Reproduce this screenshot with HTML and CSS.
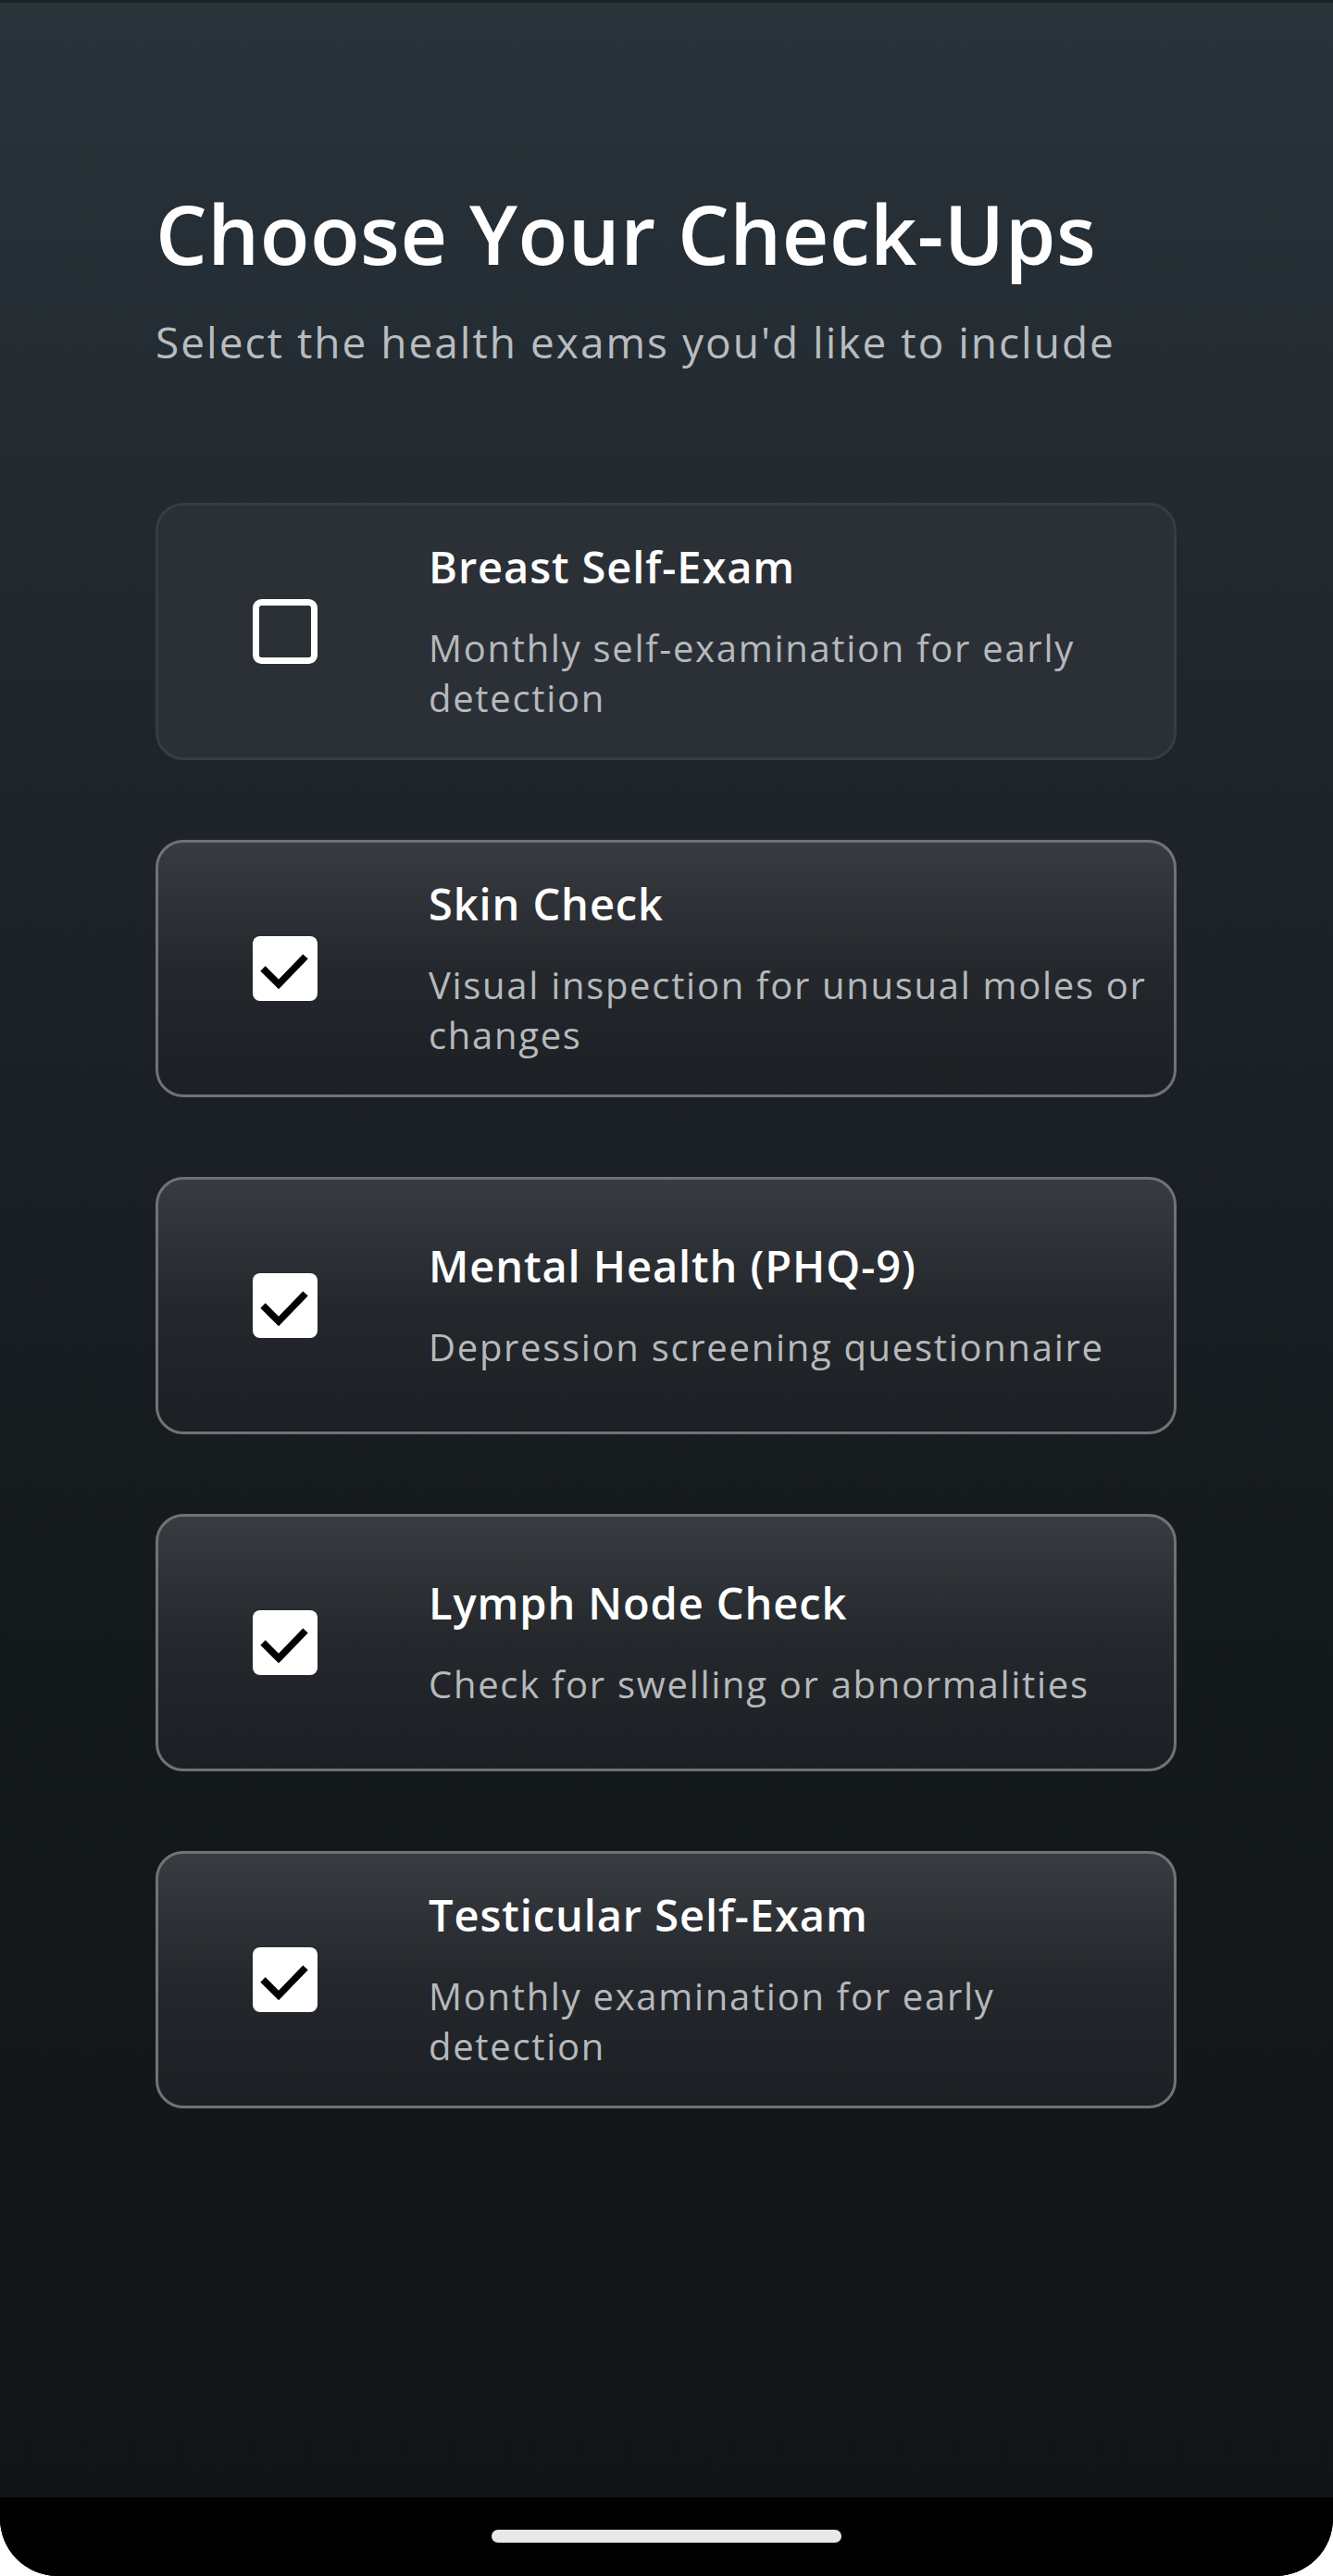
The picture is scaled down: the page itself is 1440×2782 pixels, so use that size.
FILE: index.html
```html
<!DOCTYPE html>
<html lang="en">
<head>
<meta charset="utf-8">
<title>Choose Your Check-Ups</title>
<link rel="stylesheet" href="styles.css">
</head>
<body>
<div class="screen">
  <div class="status-strip"></div>
  <main class="content">
    <header class="intro">
      <h1 class="title">Choose Your Check-Ups</h1>
      <p class="subtitle">Select the health exams you'd like to include</p>
    </header>
    <ul class="exam-list">
      <li class="exam">
        <span class="box">
          <svg viewBox="0 0 70 70" width="70" height="70"><rect x="3.5" y="3.5" width="63" height="63" rx="6" fill="none" stroke="#fff" stroke-width="7"/></svg>
        </span>
        <div class="exam-text">
          <h2 class="exam-name">Breast Self-Exam</h2>
          <p class="exam-desc">Monthly self-examination for early detection</p>
        </div>
      </li>
      <li class="exam selected">
        <span class="box">
          <svg viewBox="0 0 70 70" width="70" height="70"><rect x="0" y="0" width="70" height="70" rx="8" fill="#fff"/><path d="M11 35 L28 52 L57 22" fill="none" stroke="#000" stroke-width="7.5"/></svg>
        </span>
        <div class="exam-text">
          <h2 class="exam-name">Skin Check</h2>
          <p class="exam-desc">Visual inspection for unusual moles or changes</p>
        </div>
      </li>
      <li class="exam selected">
        <span class="box">
          <svg viewBox="0 0 70 70" width="70" height="70"><rect x="0" y="0" width="70" height="70" rx="8" fill="#fff"/><path d="M11 35 L28 52 L57 22" fill="none" stroke="#000" stroke-width="7.5"/></svg>
        </span>
        <div class="exam-text">
          <h2 class="exam-name">Mental Health (PHQ-9)</h2>
          <p class="exam-desc">Depression screening questionnaire</p>
        </div>
      </li>
      <li class="exam selected">
        <span class="box">
          <svg viewBox="0 0 70 70" width="70" height="70"><rect x="0" y="0" width="70" height="70" rx="8" fill="#fff"/><path d="M11 35 L28 52 L57 22" fill="none" stroke="#000" stroke-width="7.5"/></svg>
        </span>
        <div class="exam-text">
          <h2 class="exam-name">Lymph Node Check</h2>
          <p class="exam-desc">Check for swelling or abnormalities</p>
        </div>
      </li>
      <li class="exam selected">
        <span class="box">
          <svg viewBox="0 0 70 70" width="70" height="70"><rect x="0" y="0" width="70" height="70" rx="8" fill="#fff"/><path d="M11 35 L28 52 L57 22" fill="none" stroke="#000" stroke-width="7.5"/></svg>
        </span>
        <div class="exam-text">
          <h2 class="exam-name">Testicular Self-Exam</h2>
          <p class="exam-desc">Monthly examination for early detection</p>
        </div>
      </li>
    </ul>
  </main>
  <footer class="home-bar">
    <span class="home-indicator"></span>
  </footer>
</div>
</body>
</html>
```

FILE: styles.css
```css
* { box-sizing: border-box; }
html, body { margin: 0; padding: 0; background: #fff; }
body { font-family: "Open Sans", Lato, "Liberation Sans", sans-serif; }

.screen {
  width: 1440px;
  height: 2782px;
  display: flex;
  flex-direction: column;
  border-radius: 0 0 62px 62px;
  overflow: hidden;
  background: #000;
}

.status-strip {
  height: 3px;
  background: #1d2024;
  flex: none;
}

.content {
  flex: 1;
  background: linear-gradient(180deg, #29333a 0%, #1d2328 35%, #14191c 65%, #111518 100%);
  padding: 197px 169px 0 168px;
}

.intro { margin: 0 0 146px; }

.title {
  margin: 0;
  font-size: 88px;
  font-weight: 600;
  color: #fff;
  line-height: 1.2;
  letter-spacing: 0.5px;
}

.subtitle {
  margin: 36px 0 0;
  font-size: 46px;
  font-weight: 500;
  color: #b9bcbf;
  line-height: 1.2;
  letter-spacing: 2px;
}

.exam-list {
  list-style: none;
  margin: 0;
  padding: 0;
  display: flex;
  flex-direction: column;
  gap: 86px;
}

.exam {
  height: 278px;
  display: flex;
  align-items: center;
  border: 3px solid #363c42;
  border-radius: 30px;
  background: #2b3037;
  padding: 0 20px 0 102px;
}

.exam.selected {
  border-color: #6f7377;
  background: linear-gradient(180deg, #383c41 0%, #24282c 50%, #1c1f23 100%);
}

.box {
  flex: none;
  width: 70px;
  height: 70px;
  display: block;
  margin-right: 120px;
}
.box svg { display: block; }

.exam-text { flex: 1; min-width: 0; }

.exam-name {
  margin: 0;
  font-size: 47px;
  font-weight: 600;
  color: #fff;
  line-height: 1.25;
  letter-spacing: 0.9px;
}

.exam-desc {
  margin: 31px 0 0;
  font-size: 40px;
  font-weight: 500;
  color: #b6b9bc;
  line-height: 54px;
  letter-spacing: 1.7px;
}

.home-bar {
  flex: none;
  height: 85px;
  background: #000;
  display: flex;
  justify-content: center;
  padding-top: 35px;
}

.home-indicator {
  width: 378px;
  height: 14px;
  border-radius: 7px;
  background: #e8e8e8;
}
```
